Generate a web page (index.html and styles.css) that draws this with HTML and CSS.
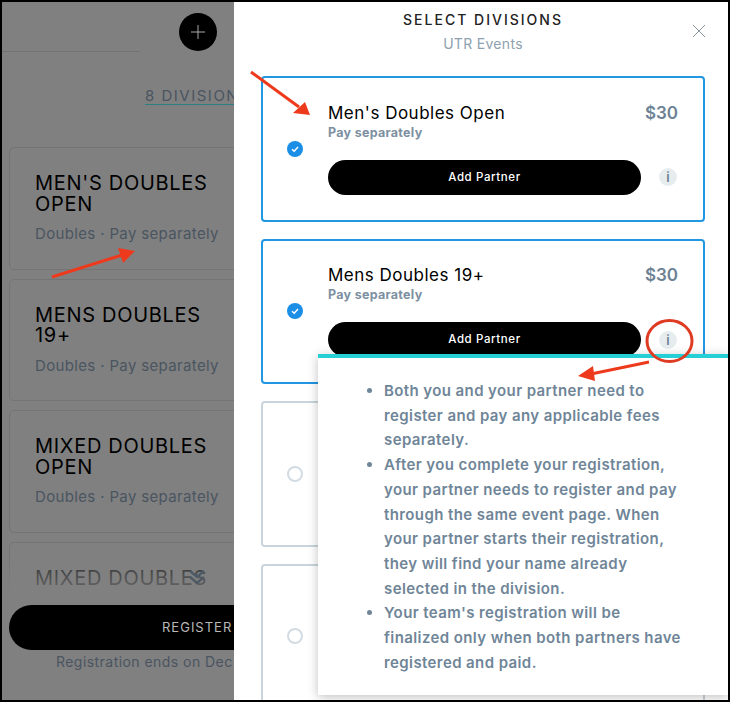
FILE: index.html
```html
<!DOCTYPE html>
<html lang="en">
<head>
    <meta charset="UTF-8">
    <title>Select Divisions</title>
    <link rel="stylesheet" href="styles.css">
</head>
<body>
    <div class="frame">
        <div class="page">
            <div class="top-row">
                <div class="top-line"></div>
                <div class="plus-btn">
                    <svg width="14" height="14" viewBox="0 0 14 14"><path d="M7 0V14M0 7H14" stroke="#aaa" stroke-width="1"/></svg>
                </div>
            </div>
            <div class="tab">8 DIVISIONS</div>
            <div class="event-list">
                <div class="event">
                    <h2>Men's Doubles Open</h2>
                    <p>Doubles · Pay separately</p>
                </div>
                <div class="event">
                    <h2>Mens Doubles 19+</h2>
                    <p>Doubles · Pay separately</p>
                </div>
                <div class="event">
                    <h2>Mixed Doubles Open</h2>
                    <p>Doubles · Pay separately</p>
                </div>
                <div class="event">
                    <h2>Mixed Doubles</h2>
                </div>
            </div>
            <div class="page-footer">
                <div class="fade"></div>
                <svg class="chevrons" width="18" height="16" viewBox="0 0 18 16"><path d="M2 2L9 8L16 2M2 8L9 14L16 8" fill="none" stroke="#4d5a66" stroke-width="2.4"/></svg>
                <div class="footer-solid">
                    <div class="register">REGISTER</div>
                    <div class="ends">Registration ends on Dec</div>
                </div>
            </div>
        </div>

        <div class="drawer">
            <div class="drawer-head">
                <h1>SELECT DIVISIONS</h1>
                <div class="drawer-sub">UTR Events</div>
                <svg class="close" width="14" height="14" viewBox="0 0 14 14"><path d="M1 1L13 13M13 1L1 13" stroke="#8a97a1" stroke-width="1"/></svg>
            </div>

            <div class="division selected">
                <div class="check">
                    <svg width="10" height="10" viewBox="0 0 10 10"><path d="M2 5.2L4.2 7.2L8 3" fill="none" stroke="#fff" stroke-width="1.5"/></svg>
                </div>
                <div class="division-body">
                    <div class="division-top">
                        <div class="division-name">Men's Doubles Open</div>
                        <div class="price">$30</div>
                    </div>
                    <div class="pay">Pay separately</div>
                    <div class="actions">
                        <div class="partner-btn">Add Partner</div>
                        <div class="info">i</div>
                    </div>
                </div>
            </div>

            <div class="division selected">
                <div class="check">
                    <svg width="10" height="10" viewBox="0 0 10 10"><path d="M2 5.2L4.2 7.2L8 3" fill="none" stroke="#fff" stroke-width="1.5"/></svg>
                </div>
                <div class="division-body">
                    <div class="division-top">
                        <div class="division-name">Mens Doubles 19+</div>
                        <div class="price">$30</div>
                    </div>
                    <div class="pay">Pay separately</div>
                    <div class="actions">
                        <div class="partner-btn">Add Partner</div>
                        <div class="info">i</div>
                    </div>
                </div>
            </div>

            <div class="division">
                <div class="check"></div>
            </div>

            <div class="division">
                <div class="check"></div>
            </div>
        </div>

        <div class="popover">
            <ul>
                <li>Both you and your partner need to register and pay any applicable fees separately.</li>
                <li>After you complete your registration, your partner needs to register and pay through the same event page. When your partner starts their registration, they will find your name already selected in the division.</li>
                <li>Your team's registration will be finalized only when both partners have registered and paid.</li>
            </ul>
        </div>

        <!-- red annotations drawn over the screenshot -->
        <svg class="notes" width="730" height="702" viewBox="0 0 730 702">
            <path d="M52 277L122 255" stroke="#ee3a1c" stroke-width="3" fill="none"/>
            <path d="M135 251L118 248L123 263Z" fill="#ee3a1c"/>
            <path d="M251 72L299 107" stroke="#ee3a1c" stroke-width="3" fill="none"/>
            <path d="M310 115L293 113L305 102Z" fill="#ee3a1c"/>
            <path d="M649 362L591 374" stroke="#ee3a1c" stroke-width="3" fill="none"/>
            <path d="M578 376L593 366L595 381Z" fill="#ee3a1c"/>
            <ellipse cx="669.5" cy="341" rx="22.5" ry="20.5" fill="none" stroke="#df3a22" stroke-width="3"/>
        </svg>
    </div>
</body>
</html>
```

FILE: styles.css
```css
* {
    box-sizing: border-box;
}

body {
    margin: 0;
    font-family: Inter, "Liberation Sans", sans-serif;
}

.frame {
    position: relative;
    width: 730px;
    height: 702px;
    padding: 2px;
    background-color: #000;
    display: flex;
    overflow: hidden;
}

/* dimmed page behind the drawer */
.page {
    position: relative;
    width: 232px;
    height: 698px;
    flex-shrink: 0;
    background-color: #808080;
    overflow: hidden;
}

.top-row {
    display: flex;
    height: 50px;
}

.top-line {
    width: 138px;
    height: 50px;
    border-bottom: 1px solid #737373;
}

.plus-btn {
    width: 38px;
    height: 38px;
    margin: 11px 0 0 39px;
    border-radius: 50%;
    background-color: #000;
    display: flex;
    align-items: center;
    justify-content: center;
}

.tab {
    width: 120px;
    margin: 35px 0 0 143px;
    height: 18px;
    font-size: 15px;
    line-height: 18px;
    letter-spacing: 1.5px;
    color: #4a5560;
    white-space: nowrap;
    overflow: hidden;
    border-bottom: 1.5px solid #2c7f82;
}

.event-list {
    margin: 42px 0 0 7px;
    width: 320px;
    display: flex;
    flex-direction: column;
    gap: 9px;
}

.event {
    height: 122.5px;
    padding: 25px 25px 0;
    border: 1px solid #747474;
    border-radius: 5px;
}

.event h2 {
    margin: 0;
    width: 190px;
    font-size: 20px;
    font-weight: 400;
    line-height: 20.5px;
    letter-spacing: 0.7px;
    text-transform: uppercase;
    color: #000;
}

.event p {
    margin: 10px 0 0;
    font-size: 15px;
    line-height: 20px;
    letter-spacing: 0.35px;
    color: #4a5560;
}

.page-footer {
    position: absolute;
    left: 0;
    right: 0;
    bottom: 0;
}

.fade {
    height: 45px;
    background: linear-gradient(rgba(128, 128, 128, 0), rgba(128, 128, 128, 0.55) 25%, #808080);
}

.chevrons {
    position: absolute;
    left: 186px;
    top: 9px;
}

.footer-solid {
    height: 95px;
    padding: 0 0 0 7px;
    background-color: #808080;
}

.register {
    width: 340px;
    height: 45px;
    border-radius: 23px;
    background-color: #000;
    color: #b8b8b8;
    font-size: 13px;
    line-height: 45px;
    letter-spacing: 1px;
    padding-left: 153px;
}

.ends {
    margin: 3px 0 0 47px;
    font-size: 14px;
    line-height: 18px;
    letter-spacing: 0.45px;
    color: #4a5560;
    white-space: nowrap;
}

/* right side drawer */
.drawer {
    flex: 1;
    height: 698px;
    background-color: #fff;
    overflow: hidden;
    padding: 0 23px 0 27px;
}

.drawer-head {
    position: relative;
    height: 74px;
    text-align: center;
    padding-top: 9px;
}

.drawer-head h1 {
    margin: 0;
    font-size: 14px;
    font-weight: 500;
    line-height: 17px;
    letter-spacing: 2px;
    color: #222;
}

.drawer-sub {
    margin-top: 7px;
    font-size: 14px;
    line-height: 17px;
    letter-spacing: 0.3px;
    color: #8ea1b0;
}

.close {
    position: absolute;
    right: -1px;
    top: 22px;
}

.division {
    display: flex;
    align-items: center;
    height: 145.5px;
    margin-bottom: 17px;
    padding: 0 24px 0 24px;
    border: 2px solid #c9d5dc;
    border-radius: 4px;
}

.division.selected {
    border-color: #2196e3;
}

.check {
    width: 16px;
    height: 16px;
    flex-shrink: 0;
    border-radius: 50%;
    border: 2px solid #d3dce2;
    display: flex;
    align-items: center;
    justify-content: center;
}

.selected .check {
    border: none;
    background-color: #1b8fe6;
}

.division-body {
    flex: 1;
    margin-left: 25px;
    padding-bottom: 1px;
}

.division-top {
    display: flex;
    justify-content: space-between;
    align-items: center;
    height: 22px;
}

.division-name {
    font-size: 17px;
    line-height: 22px;
    letter-spacing: 0.5px;
    color: #000;
}

.price {
    margin-right: 1px;
    font-size: 17px;
    font-weight: 600;
    color: #6d8294;
}

.pay {
    margin-top: 1px;
    font-size: 12.5px;
    font-weight: 700;
    line-height: 15px;
    letter-spacing: 0.3px;
    color: #7d90a1;
}

.actions {
    display: flex;
    align-items: center;
    margin-top: 20px;
}

.partner-btn {
    width: 313px;
    height: 35px;
    border-radius: 18px;
    background-color: #000;
    color: #fff;
    font-size: 11.5px;
    font-weight: 500;
    line-height: 35px;
    letter-spacing: 0.6px;
    text-align: center;
}

.info {
    width: 18px;
    height: 18px;
    margin-left: 18px;
    border-radius: 50%;
    background-color: #e7ecef;
    color: #6d8294;
    font-size: 13px;
    font-weight: 600;
    line-height: 18px;
    text-align: center;
}

/* info popover and annotations sit on top of everything */
.popover {
    position: absolute;
    left: 318px;
    top: 354px;
    width: 410px;
    height: 341px;
    background-color: #fff;
    border-top: 4px solid #24d0d6;
    box-shadow: 0 2px 10px rgba(0, 0, 0, 0.25);
}

.popover ul {
    margin: 21px 0 0;
    padding: 0 43px 0 66px;
}

.popover li {
    font-size: 15px;
    font-weight: 600;
    line-height: 24.7px;
    letter-spacing: 0.4px;
    color: #6f8598;
}

.notes {
    position: absolute;
    left: 0;
    top: 0;
    pointer-events: none;
}
```
